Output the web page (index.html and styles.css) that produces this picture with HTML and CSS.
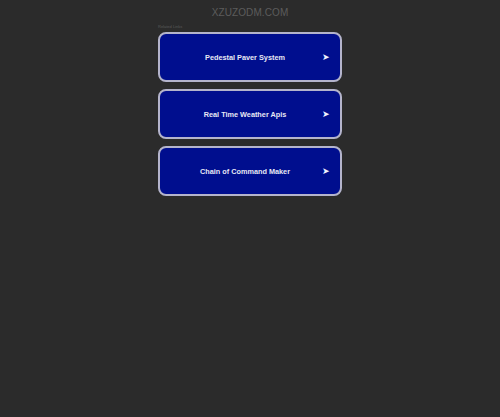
FILE: index.html
```html
<!DOCTYPE html>
<html>
<head>
<meta charset="utf-8">
<link rel="stylesheet" href="styles.css">
</head>
<body>
<div class="page">
  <div class="domain">XZUZODM.COM</div>
  <div class="links">
    <div class="label">Related Links</div>
    <a class="btn" href="#"><span class="txt">Pedestal Paver System</span><span class="arr">➤</span></a>
    <a class="btn" href="#"><span class="txt">Real Time Weather Apis</span><span class="arr">➤</span></a>
    <a class="btn" href="#"><span class="txt">Chain of Command Maker</span><span class="arr">➤</span></a>
  </div>
</div>
</body>
</html>
```
FILE: styles.css
```css
html, body {
  margin: 0;
  padding: 0;
  background: #2b2b2b;
  height: 100%;
}
.page {
  display: flex;
  flex-direction: column;
  align-items: center;
  font-family: "Liberation Sans", Arial, sans-serif;
}
.domain {
  margin-top: 6px;
  height: 14px;
  line-height: 14px;
  font-size: 10px;
  color: #5c5c5c;
  letter-spacing: 0.1px;
}
.links {
  width: 184px;
  display: flex;
  flex-direction: column;
  gap: 7px;
  margin-top: 4px;
}
.label {
  font-size: 4px;
  line-height: 5px;
  height: 5px;
  color: #5a5a5a;
  margin-bottom: -4px;
}
.btn {
  box-sizing: border-box;
  height: 50px;
  border: 2px solid #b4b4cc;
  border-radius: 8px;
  background: #000e8e;
  display: flex;
  align-items: center;
  text-decoration: none;
  color: #e8e8f4;
}
.txt {
  flex: 1;
  text-align: center;
  font-size: 7.3px;
  font-weight: bold;
  padding-left: 8px;
}
.arr {
  font-family: "DejaVu Sans", sans-serif;
  font-size: 9px;
  width: 18px;
  text-align: left;
  color: #f0f0ff;
}
```
